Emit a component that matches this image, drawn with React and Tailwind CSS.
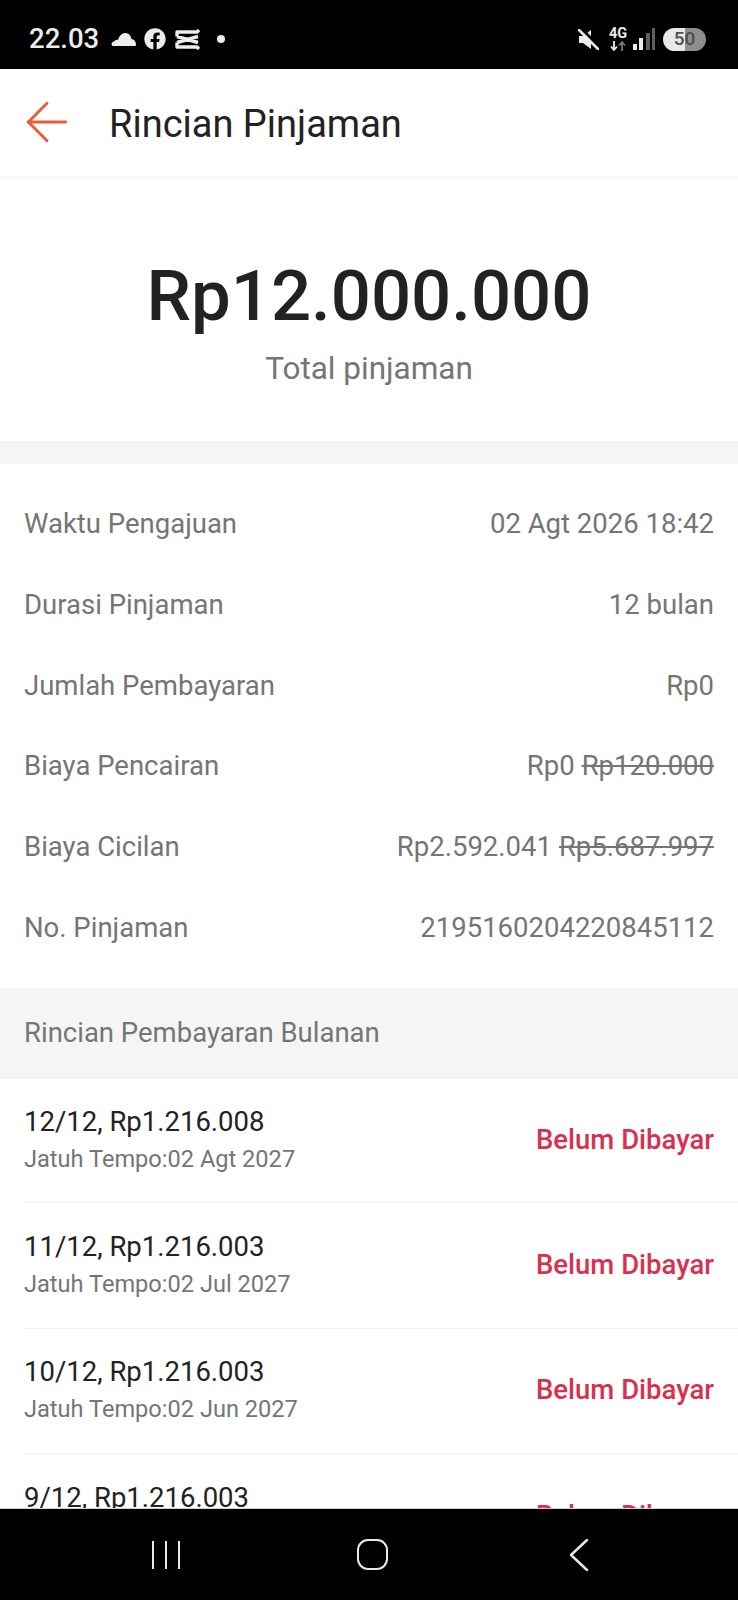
import { ArrowLeft } from "lucide-react";
import { FaFacebook } from "react-icons/fa";

const details = [
  { label: "Waktu Pengajuan", value: "02 Agt 2026 18:42" },
  { label: "Durasi Pinjaman", value: "12 bulan" },
  { label: "Jumlah Pembayaran", value: "Rp0" },
  { label: "Biaya Pencairan", value: "Rp0", struck: "Rp120.000" },
  { label: "Biaya Cicilan", value: "Rp2.592.041", struck: "Rp5.687.997" },
  { label: "No. Pinjaman", value: "2195160204220845112" },
];

const payments = [
  { title: "12/12, Rp1.216.008", due: "Jatuh Tempo:02 Agt 2027" },
  { title: "11/12, Rp1.216.003", due: "Jatuh Tempo:02 Jul 2027" },
  { title: "10/12, Rp1.216.003", due: "Jatuh Tempo:02 Jun 2027" },
  { title: "9/12, Rp1.216.003", due: "Jatuh Tempo:02 Mei 2027" },
];

function StatusBar() {
  return (
    <div className="h-[69px] shrink-0 bg-black flex items-center justify-between pt-[9px] pl-[29px] pr-[32px] text-[#ececec]">
      <div className="flex items-center">
        <span className="w-[70px] text-[27.500px] font-medium leading-none">22.03</span>
        {/* cloud */}
        <svg width="25" height="13" viewBox="0 0 25 13" className="ml-[12px] mt-[1px]">
          <path d="M2 13C0 13 0 9 3 8.500 4 7 6 6.500 7 7 8 3 11 0 14 0c4 0 6 3 6.500 6 2.500 0 4.500 3 4.500 5.500 0 1-.5 1.500-1.500 1.500z" fill="currentColor" />
        </svg>
        <FaFacebook className="ml-[8px] text-[22px]" />
        {/* capcut */}
        <svg width="25" height="21" viewBox="0 0 25 21" className="ml-[9px]">
          <path d="M2 7.500V3h20l2-2M2 13.500V18h20l2 2M2 7.500l21 6M2 13.500l21-6" fill="none" stroke="currentColor" strokeWidth="3.400" strokeLinejoin="round" />
        </svg>
        <span className="ml-[17px] w-[8px] h-[8px] rounded-full bg-[#ececec]" />
      </div>
      <div className="flex items-center">
        {/* muted speaker */}
        <svg width="21" height="21" viewBox="0 0 21 21">
          <path d="M1 7h4l8-6v19l-8-6H1z" fill="currentColor" />
          <path d="M3 -1 21 18" stroke="#000" strokeWidth="3" />
          <path d="M1 1l19 19" stroke="currentColor" strokeWidth="2.500" strokeLinecap="round" />
        </svg>
        <div className="ml-[10px] w-[19px] flex flex-col items-center">
          <span className="text-[14.500px] font-bold leading-[11px]">4G</span>
          <svg width="16" height="10" viewBox="0 0 16 10" className="mt-[2px]">
            <path d="M4 0v8M1 5.500 4 9l3-3.500" fill="none" stroke="#ececec" strokeWidth="1.800" />
            <path d="M12 10V2M9 4.500 12 1l3 3.500" fill="none" stroke="#777" strokeWidth="1.800" />
          </svg>
        </div>
        <div className="ml-[5px] flex items-end gap-[2.500px] h-[22px]">
          <span className="w-[4px] h-[6px] bg-[#ececec]" />
          <span className="w-[4px] h-[12px] bg-[#ececec]" />
          <span className="w-[4px] h-[17px] bg-[#5f5f5f]" />
          <span className="w-[3px] h-[22px] bg-[#5f5f5f]" />
        </div>
        <div className="ml-[8px] w-[43px] h-[23px] rounded-full bg-[linear-gradient(90deg,#e8e8e8_0,#e8e8e8_51%,#8e8e8e_51%,#8e8e8e_100%)] text-[#4f4f4f] text-[19px] font-medium flex items-center justify-center">
          50
        </div>
      </div>
    </div>
  );
}

function NavBar() {
  return (
    <div className="h-[92px] shrink-0 bg-black border-t border-[#cfcfcf] flex items-center text-[#e8e8e8]">
      <div className="ml-[152px] flex gap-[11px]">
        <span className="w-[2px] h-[28px] bg-[#e8e8e8]" />
        <span className="w-[2px] h-[28px] bg-[#e8e8e8]" />
        <span className="w-[2px] h-[28px] bg-[#e8e8e8]" />
      </div>
      <div className="ml-[177px] w-[31px] h-[31px] rounded-[11px] border-[2.500px] border-[#e8e8e8]" />
      <svg width="20" height="32" viewBox="0 0 20 32" className="ml-[181px]">
        <path d="M18 1 2 16l16 15" fill="none" stroke="currentColor" strokeWidth="2.500" strokeLinecap="round" strokeLinejoin="round" />
      </svg>
    </div>
  );
}

export default function App() {
  return (
    <div className="w-[738px] h-[1600px] flex flex-col overflow-hidden bg-white font-['Roboto',sans-serif]">
      <StatusBar />

      <div className="flex-1 min-h-0 overflow-hidden">
        <div className="h-[110px] flex items-center border-b-[3px] border-[#f7f7f7]">
          <ArrowLeft size={64} strokeWidth={1.100} className="ml-[15px] mt-[-2px] text-[#ee5a3a]" />
          <h1 className="ml-[30px] mt-[3px] text-[38px] text-[#222]">Rincian Pinjaman</h1>
        </div>

        <div className="h-[262px] flex flex-col items-center pt-[75px]">
          <div className="text-[70.700px] font-medium leading-[84px] text-[#222]">Rp12.000.000</div>
          <div className="text-[31.500px] leading-[36px] mt-[13px] text-[#757575]">Total pinjaman</div>
        </div>

        <div className="h-[23px] bg-[#f5f5f5]" />

        <div className="pt-[19.500px] pb-[20.500px] px-[24px]">
          {details.map((row) => (
            <div key={row.label} className="h-[80.700px] flex items-center justify-between text-[27.500px] text-[#757575]">
              <span>{row.label}</span>
              <span>
                {row.value}
                {row.struck && <span className="ml-[7px] line-through">{row.struck}</span>}
              </span>
            </div>
          ))}
        </div>

        <div className="h-[90px] bg-[#f5f5f5] border-b border-[#ececec] px-[24px] flex items-center text-[27.500px] text-[#757575]">
          Rincian Pembayaran Bulanan
        </div>

        {payments.map((item) => (
          <div key={item.title} className="ml-[24px] h-[125.300px] pr-[24px] border-b border-[#eeeeee] flex items-center justify-between">
            <div className="pb-[3px]">
              <div className="text-[27.500px] leading-[36px] text-[#222]">{item.title}</div>
              <div className="text-[23.600px] leading-[30px] mt-[4px] text-[#757575]">{item.due}</div>
            </div>
            <div className="pb-[2px] text-[27.500px] font-medium text-[#d9304f]">Belum Dibayar</div>
          </div>
        ))}
      </div>

      <NavBar />
    </div>
  );
}
